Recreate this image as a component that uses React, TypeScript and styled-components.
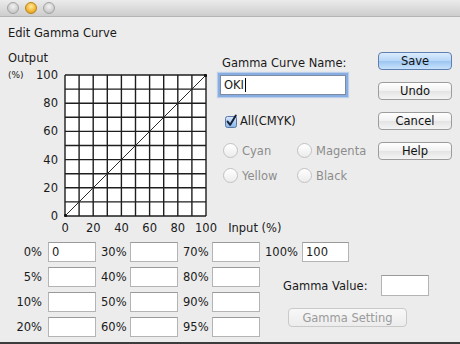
import React, { FC } from 'react';
import styled, { createGlobalStyle, css } from 'styled-components';

const GlobalStyle = createGlobalStyle`
  html, body {
    margin: 0;
    padding: 0;
    background: #ececec;
  }
  * {
    box-sizing: border-box;
  }
`

const Window = styled.div`
  width: 460px;
  height: 344px;
  display: flex;
  flex-direction: column;
  background: #ececec;
  border-bottom: 2px solid #3c3c3c;
  font-family: "DejaVu Sans", "Liberation Sans", sans-serif;
  font-size: 11.5px;
  color: #1a1a1a;
  overflow: hidden;
`

const TitleBar = styled.div`
  height: 17px;
  flex: none;
  display: flex;
  align-items: center;
  gap: 6px;
  padding-left: 7px;
  background: linear-gradient(#ebebeb, #cdcdcd);
  border-bottom: 1px solid #b4b4b4;
`

const Light = styled.div<{ $active?: boolean }>`
  width: 12px;
  height: 12px;
  border-radius: 50%;
  border: 1px solid #a2a2a2;
  background: radial-gradient(circle at 50% 35%, #f2f2f2 0%, #d2d2d2 55%, #b8b8b8 100%);
  ${p => p.$active && css`
    border-color: #b98419;
    background: radial-gradient(circle at 50% 35%, #ffeaa0 0%, #f4b93a 55%, #d9911a 100%);
  `}
`

const Content = styled.div`
  padding: 0 8px;
  display: flex;
  flex-direction: column;
`

const Heading = styled.div`
  margin-top: 9px;
  line-height: 14px;
`

const Main = styled.div`
  margin-top: 11px;
  display: flex;
`

const ChartPanel = styled.div`
  flex: none;
  width: 210px;
  display: grid;
  grid-template-columns: 56px 143px;
  grid-template-rows: 14px auto auto;
`

const AxisTitle = styled.div`
  grid-column: 1 / -1;
  line-height: 14px;
`

const YAxis = styled.div`
  grid-row: 2;
  align-self: start;
  margin: 3px 0 -6px;
  height: 155px;
  display: flex;
  flex-direction: column;
  justify-content: space-between;
  padding-right: 6px;
`

const YLabel = styled.div`
  line-height: 14px;
  display: flex;
  justify-content: space-between;
  align-items: center;
`

const Unit = styled.span`
  font-size: 9px;
`

const ChartBox = styled.div`
  grid-row: 2;
  margin-top: 9px;
  width: 143px;
  height: 143px;
`

const XAxis = styled.div`
  grid-column: 1 / -1;
  margin-top: 4px;
  padding-left: 43px;
  display: flex;
  line-height: 14px;
  white-space: nowrap;
`

const XLabel = styled.div`
  width: 28.2px;
  flex: none;
  text-align: center;
`

const InputCaption = styled.div`
  margin-left: 8px;
`

const FormPanel = styled.div`
  flex: none;
  width: 150px;
  display: flex;
  flex-direction: column;
`

const FieldLabel = styled.div`
  margin-top: 5px;
  padding-left: 4px;
  line-height: 14px;
`

const NameBox = styled.div`
  margin: 5px 0 0 2px;
  width: 126px;
  height: 20px;
  background: #fff;
  border: 1px solid #7d8aa0;
  box-shadow: 0 0 0 2px #86aee4, 0 0 1px 3px rgba(134, 174, 228, 0.45);
  padding-left: 3px;
  display: flex;
  align-items: center;
  line-height: 14px;
`

const Caret = styled.span`
  width: 1px;
  height: 14px;
  background: #000;
  margin-left: 1px;
`

const CheckRow = styled.label`
  margin: 19px 0 0 6px;
  display: flex;
  align-items: center;
  gap: 2px;
  line-height: 14px;
`

const RadioGrid = styled.div`
  margin: 15px 0 0 5px;
  display: grid;
  grid-template-columns: 74px auto;
  row-gap: 10px;
`

const RadioItem = styled.div`
  display: flex;
  align-items: center;
  gap: 4px;
  height: 15px;
  color: #8c8c8c;
`

const RadioDot = styled.span`
  width: 15px;
  height: 15px;
  border-radius: 50%;
  border: 1px solid #c2c2c2;
  background: linear-gradient(#ffffff, #ececec);
  flex: none;
`

const ButtonColumn = styled.div`
  flex: none;
  margin: 1px 0 0 10px;
  display: flex;
  flex-direction: column;
  gap: 12px;
`

const Button = styled.button<{ $primary?: boolean }>`
  width: 74px;
  height: 18px;
  padding: 0;
  font-family: inherit;
  font-size: 11.5px;
  color: #111;
  border-radius: 4px;
  border: 1px solid #9c9c9c;
  background: linear-gradient(#ffffff, #f1f1f1 50%, #e4e4e4 51%, #f4f4f4);
  ${p => p.$primary && css`
    border-color: #5f7fae;
    background: linear-gradient(#dcecfd, #b7d6f7 50%, #9cc6f2 51%, #c8e2fb);
  `}
`

const ValuesGrid = styled.div`
  margin-top: 7px;
  display: grid;
  grid-template-columns: 40px 48px 34px 48px 34px 48px 42px 1fr;
  grid-template-rows: repeat(4, 20px);
  row-gap: 5px;
`

const PercentLabel = styled.div<{ $first?: boolean }>`
  display: flex;
  align-items: center;
  justify-content: ${p => (p.$first ? 'flex-end' : 'flex-start')};
  padding: ${p => (p.$first ? '0 6px 0 0' : '0 0 0 5px')};
`

const ValueBox = styled.div<{ $width?: number; $height?: number }>`
  width: ${p => p.$width ?? 48}px;
  height: ${p => p.$height ?? 20}px;
  background: #fff;
  border: 1px solid #b4b4b4;
  border-top-color: #9a9a9a;
  padding-left: 3px;
  display: flex;
  align-items: center;
`

const GammaPanel = styled.div`
  grid-column: 7 / 9;
  grid-row: 2 / 5;
  padding-left: 23px;
  display: flex;
  flex-direction: column;
`

const GammaRow = styled.div`
  margin-top: 8px;
  display: flex;
  align-items: center;
`

const GammaLabel = styled.div`
  width: 98px;
`

const SettingButton = styled.button`
  margin: 12px 0 0 5px;
  width: 119px;
  height: 19px;
  padding: 0;
  font-family: inherit;
  font-size: 11.5px;
  color: #9b9b9b;
  border-radius: 4px;
  border: 1px solid #c9c9c9;
  background: linear-gradient(#f8f8f8, #ececec);
`

const grid = Array.from({ length: 11 }, (_, i) => 1 + i * 14.1)

const Chart: FC = () => (
  <svg width="143" height="143" viewBox="0 0 143 143">
    <rect x="1" y="1" width="141" height="141" fill="#fff" />
    {grid.map(p => (
      <g key={p}>
        <line x1={p} y1="1" x2={p} y2="142" stroke="#1e1e1e" strokeWidth="1.4" />
        <line x1="1" y1={p} x2="142" y2={p} stroke="#1e1e1e" strokeWidth="1.4" />
      </g>
    ))}
    <line x1="1" y1="142" x2="142" y2="1" stroke="#2a2a2a" strokeWidth="1" />
    <circle cx="1.5" cy="141.5" r="1.6" fill="#111" />
    <circle cx="141.5" cy="1.5" r="1.6" fill="#111" />
  </svg>
)

const CheckBox: FC = () => (
  <svg width="14" height="14" viewBox="0 0 14 14">
    <defs>
      <linearGradient id="cb" x1="0" y1="0" x2="0" y2="1">
        <stop offset="0" stopColor="#d9e9fb" />
        <stop offset="1" stopColor="#89b4e6" />
      </linearGradient>
    </defs>
    <rect x="1.5" y="2.5" width="11" height="11" rx="2" fill="url(#cb)" stroke="#5a78a3" />
    <path d="M3.6 7.6 L6.2 10.8 L11.8 1.6" fill="none" stroke="#14213a" strokeWidth="2" strokeLinecap="round" strokeLinejoin="round" />
  </svg>
)

const yTicks = ['100', '80', '60', '40', '20', '0']
const xTicks = ['0', '20', '40', '60', '80', '100']

const rows = [
  ['0%', '30%', '70%'],
  ['5%', '40%', '80%'],
  ['10%', '50%', '90%'],
  ['20%', '60%', '95%'],
]

export default function App() {
  return (
    <>
      <GlobalStyle />
      <Window>
        <TitleBar>
          <Light />
          <Light $active />
          <Light />
        </TitleBar>
        <Content>
          <Heading>Edit Gamma Curve</Heading>
          <Main>
            <ChartPanel>
              <AxisTitle>Output</AxisTitle>
              <YAxis>
                {yTicks.map((t, i) => (
                  <YLabel key={t}>
                    {i === 0 ? <Unit>(%)</Unit> : <span />}
                    <span>{t}</span>
                  </YLabel>
                ))}
              </YAxis>
              <ChartBox>
                <Chart />
              </ChartBox>
              <XAxis>
                {xTicks.map(t => (
                  <XLabel key={t}>{t}</XLabel>
                ))}
                <InputCaption>Input (%)</InputCaption>
              </XAxis>
            </ChartPanel>

            <FormPanel>
              <FieldLabel>Gamma Curve Name:</FieldLabel>
              <NameBox>
                OKI<Caret />
              </NameBox>
              <CheckRow>
                <CheckBox />
                All(CMYK)
              </CheckRow>
              <RadioGrid>
                <RadioItem><RadioDot />Cyan</RadioItem>
                <RadioItem><RadioDot />Magenta</RadioItem>
                <RadioItem><RadioDot />Yellow</RadioItem>
                <RadioItem><RadioDot />Black</RadioItem>
              </RadioGrid>
            </FormPanel>

            <ButtonColumn>
              <Button $primary>Save</Button>
              <Button>Undo</Button>
              <Button>Cancel</Button>
              <Button>Help</Button>
            </ButtonColumn>
          </Main>

          <ValuesGrid>
            {rows.map((r, i) => (
              <React.Fragment key={r[0]}>
                <PercentLabel $first>{r[0]}</PercentLabel>
                <ValueBox>{i === 0 ? '0' : ''}</ValueBox>
                <PercentLabel>{r[1]}</PercentLabel>
                <ValueBox />
                <PercentLabel>{r[2]}</PercentLabel>
                <ValueBox />
                {i === 0 && (
                  <>
                    <PercentLabel>100%</PercentLabel>
                    <ValueBox $width={47}>100</ValueBox>
                  </>
                )}
              </React.Fragment>
            ))}
            <GammaPanel>
              <GammaRow>
                <GammaLabel>Gamma Value:</GammaLabel>
                <ValueBox $width={48} $height={21} />
              </GammaRow>
              <SettingButton disabled>Gamma Setting</SettingButton>
            </GammaPanel>
          </ValuesGrid>
        </Content>
      </Window>
    </>
  )
}
